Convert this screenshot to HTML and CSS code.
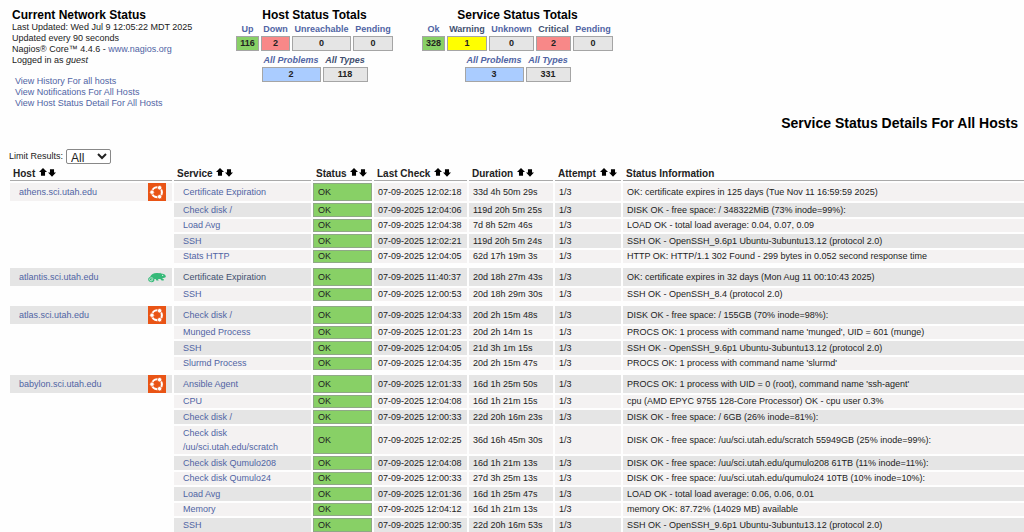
FILE: index.html
```html
<!DOCTYPE html>
<html lang="en">
<head>
<meta charset="utf-8">
<title>Current Network Status</title>
<link rel="stylesheet" href="styles.css">
</head>
<body>
<svg class="defs" aria-hidden="true">
  <symbol id="up" viewBox="0 0 9 9"><path d="M4.5 0 9 4.6H6.800V8.600H2.200V4.600H0z"/></symbol>
  <symbol id="down" viewBox="0 0 9 9"><path d="M2.200 .4H6.800V4H9L4.500 8.800 0 4H2.200z"/></symbol>
  <symbol id="ubuntu" viewBox="0 0 18 18">
    <rect width="18" height="18" fill="#e95415"/>
    <circle cx="9" cy="9.200" r="4.900" fill="none" stroke="#fff" stroke-width="2.100"/>
    <g fill="#fff" stroke="#e95415" stroke-width=".7"><circle cx="4" cy="9.200" r="2.200"/><circle cx="11.600" cy="4.700" r="2.200"/><circle cx="11.600" cy="13.700" r="2.200"/></g>
  </symbol>
  <symbol id="suse" viewBox="0 0 18 18">
    <path fill="#35b978" d="M2 9C3.500 5.500 7 4.300 11.300 5.300L12.300 4.700 12.800 5.600C15 5.500 17.500 6.600 17.800 8.200 18 9.400 16.500 10 14.800 9.900L14.200 10.500 16 11.500 15.600 12.500H13.600L12.300 10.900 10 11.100 10.700 12.600H8.400L7.600 11.100 6.300 11C7 13 5.600 14.200 3.500 14.200 1.300 14.200 0 12.800 .2 11.100.4 9.800 1.200 9.200 2 9z"/>
    <path fill="none" stroke="#d6efe2" stroke-width=".8" d="M5.300 10.500C3.500 9 1.400 10 1.500 11.500 1.700 13.200 4.300 13.400 4.700 12 4.800 11.200 3.600 10.900 3.200 11.600"/>
    <circle cx="14.700" cy="7.300" r=".6" fill="#fff"/>
  </symbol>
</svg>

<header class="top">
  <section class="info">
    <h1>Current Network Status</h1>
    <p>Last Updated: Wed Jul 9 12:05:22 MDT 2025<br>Updated every 90 seconds<br>Nagios® Core™ 4.4.6 - <a href="#">www.nagios.org</a><br>Logged in as <i>guest</i></p>
    <nav><a href="#">View History For all hosts</a><a href="#">View Notifications For All Hosts</a><a href="#">View Host Status Detail For All Hosts</a></nav>
  </section>
  <section class="totals">
    <h2>Host Status Totals</h2>
    <table>
      <colgroup><col class="w23"><col class="w29"><col class="w59"><col class="w40"></colgroup>
      <tr><th><a href="#">Up</a></th><th><a href="#">Down</a></th><th><a href="#">Unreachable</a></th><th><a href="#">Pending</a></th></tr>
      <tr><td class="ok">116</td><td class="bad">2</td><td>0</td><td>0</td></tr>
    </table>
    <table class="sum">
      <colgroup><col class="w59"><col class="w45"></colgroup>
      <tr><th><a href="#">All Problems</a></th><th><a class="seen" href="#">All Types</a></th></tr>
      <tr><td class="prob">2</td><td>118</td></tr>
    </table>
  </section>
  <section class="totals">
    <h2>Service Status Totals</h2>
    <table>
      <colgroup><col class="w23"><col class="w40"><col class="w45"><col class="w35"><col class="w40"></colgroup>
      <tr><th><a href="#">Ok</a></th><th><a class="seen" href="#">Warning</a></th><th><a href="#">Unknown</a></th><th><a class="seen" href="#">Critical</a></th><th><a href="#">Pending</a></th></tr>
      <tr><td class="ok">328</td><td class="warn">1</td><td>0</td><td class="bad">2</td><td>0</td></tr>
    </table>
    <table class="sum">
      <colgroup><col class="w59"><col class="w45"></colgroup>
      <tr><th><a href="#">All Problems</a></th><th><a href="#">All Types</a></th></tr>
      <tr><td class="prob">3</td><td>331</td></tr>
    </table>
  </section>
</header>

<h2 class="title">Service Status Details For All Hosts</h2>

<form class="limit">
  <label for="limit">Limit Results:</label>
  <select id="limit"><option>All</option><option>50</option><option>100</option></select>
</form>

<main class="results">
<table class="status">
  <colgroup><col class="c-host"><col class="c-service"><col class="c-status"><col class="c-check"><col class="c-duration"><col class="c-attempt"><col></colgroup>
  <thead>
  <tr>
    <th>Host <span class="sort"><svg><use href="#up"/></svg><svg><use href="#down"/></svg></span></th>
    <th>Service <span class="sort"><svg><use href="#up"/></svg><svg><use href="#down"/></svg></span></th>
    <th>Status <span class="sort"><svg><use href="#up"/></svg><svg><use href="#down"/></svg></span></th>
    <th>Last Check <span class="sort"><svg><use href="#up"/></svg><svg><use href="#down"/></svg></span></th>
    <th>Duration <span class="sort"><svg><use href="#up"/></svg><svg><use href="#down"/></svg></span></th>
    <th>Attempt <span class="sort"><svg><use href="#up"/></svg><svg><use href="#down"/></svg></span></th>
    <th>Status Information</th>
  </tr>
  </thead>
  <tbody>
  <tr class="odd first"><td class="host"><div><a href="#">athens.sci.utah.edu</a><svg><use href="#ubuntu"/></svg></div></td><td class="svc"><a href="#">Certificate Expiration</a></td><td class="st">OK</td><td>07-09-2025 12:02:18</td><td>33d 4h 50m 29s</td><td>1/3</td><td>OK: certificate expires in 125 days (Tue Nov 11 16:59:59 2025)</td></tr>
  <tr class="even"><td class="none"></td><td class="svc"><a href="#">Check disk /</a></td><td class="st">OK</td><td>07-09-2025 12:04:06</td><td>119d 20h 5m 25s</td><td>1/3</td><td>DISK OK - free space: / 348322MiB (73% inode=99%):</td></tr>
  <tr class="odd"><td class="none"></td><td class="svc"><a href="#">Load Avg</a></td><td class="st">OK</td><td>07-09-2025 12:04:38</td><td>7d 8h 52m 46s</td><td>1/3</td><td>LOAD OK - total load average: 0.04, 0.07, 0.09</td></tr>
  <tr class="even"><td class="none"></td><td class="svc"><a href="#">SSH</a></td><td class="st">OK</td><td>07-09-2025 12:02:21</td><td>119d 20h 5m 24s</td><td>1/3</td><td>SSH OK - OpenSSH_9.6p1 Ubuntu-3ubuntu13.12 (protocol 2.0)</td></tr>
  <tr class="odd"><td class="none"></td><td class="svc"><a href="#">Stats HTTP</a></td><td class="st">OK</td><td>07-09-2025 12:04:05</td><td>62d 17h 19m 3s</td><td>1/3</td><td>HTTP OK: HTTP/1.1 302 Found - 299 bytes in 0.052 second response time</td></tr>
  <tr class="gap"><td colspan="7"></td></tr>
  <tr class="even first"><td class="host"><div><a href="#">atlantis.sci.utah.edu</a><svg><use href="#suse"/></svg></div></td><td class="svc"><a class="seen" href="#">Certificate Expiration</a></td><td class="st">OK</td><td>07-09-2025 11:40:37</td><td>20d 18h 27m 43s</td><td>1/3</td><td>OK: certificate expires in 32 days (Mon Aug 11 00:10:43 2025)</td></tr>
  <tr class="odd"><td class="none"></td><td class="svc"><a href="#">SSH</a></td><td class="st">OK</td><td>07-09-2025 12:00:53</td><td>20d 18h 29m 30s</td><td>1/3</td><td>SSH OK - OpenSSH_8.4 (protocol 2.0)</td></tr>
  <tr class="gap"><td colspan="7"></td></tr>
  <tr class="even first"><td class="host"><div><a href="#">atlas.sci.utah.edu</a><svg><use href="#ubuntu"/></svg></div></td><td class="svc"><a href="#">Check disk /</a></td><td class="st">OK</td><td>07-09-2025 12:04:33</td><td>20d 2h 15m 48s</td><td>1/3</td><td>DISK OK - free space: / 155GB (70% inode=98%):</td></tr>
  <tr class="odd"><td class="none"></td><td class="svc"><a href="#">Munged Process</a></td><td class="st">OK</td><td>07-09-2025 12:01:23</td><td>20d 2h 14m 1s</td><td>1/3</td><td>PROCS OK: 1 process with command name 'munged', UID = 601 (munge)</td></tr>
  <tr class="even"><td class="none"></td><td class="svc"><a href="#">SSH</a></td><td class="st">OK</td><td>07-09-2025 12:04:05</td><td>21d 3h 1m 15s</td><td>1/3</td><td>SSH OK - OpenSSH_9.6p1 Ubuntu-3ubuntu13.12 (protocol 2.0)</td></tr>
  <tr class="odd"><td class="none"></td><td class="svc"><a href="#">Slurmd Process</a></td><td class="st">OK</td><td>07-09-2025 12:04:35</td><td>20d 2h 15m 47s</td><td>1/3</td><td>PROCS OK: 1 process with command name 'slurmd'</td></tr>
  <tr class="gap"><td colspan="7"></td></tr>
  <tr class="even first"><td class="host"><div><a href="#">babylon.sci.utah.edu</a><svg><use href="#ubuntu"/></svg></div></td><td class="svc"><a href="#">Ansible Agent</a></td><td class="st">OK</td><td>07-09-2025 12:01:33</td><td>16d 1h 25m 50s</td><td>1/3</td><td>PROCS OK: 1 process with UID = 0 (root), command name 'ssh-agent'</td></tr>
  <tr class="odd"><td class="none"></td><td class="svc"><a href="#">CPU</a></td><td class="st">OK</td><td>07-09-2025 12:04:08</td><td>16d 1h 21m 15s</td><td>1/3</td><td>cpu (AMD EPYC 9755 128-Core Processor) OK - cpu user 0.3%</td></tr>
  <tr class="even"><td class="none"></td><td class="svc"><a href="#">Check disk /</a></td><td class="st">OK</td><td>07-09-2025 12:00:33</td><td>22d 20h 16m 23s</td><td>1/3</td><td>DISK OK - free space: / 6GB (26% inode=81%):</td></tr>
  <tr class="odd multi"><td class="none"></td><td class="svc"><a href="#">Check disk<br>/uu/sci.utah.edu/scratch</a></td><td class="st">OK</td><td>07-09-2025 12:02:25</td><td>36d 16h 45m 30s</td><td>1/3</td><td>DISK OK - free space: /uu/sci.utah.edu/scratch 55949GB (25% inode=99%):</td></tr>
  <tr class="even"><td class="none"></td><td class="svc"><a href="#">Check disk Qumulo208</a></td><td class="st">OK</td><td>07-09-2025 12:04:08</td><td>16d 1h 21m 13s</td><td>1/3</td><td>DISK OK - free space: /uu/sci.utah.edu/qumulo208 61TB (11% inode=11%):</td></tr>
  <tr class="odd"><td class="none"></td><td class="svc"><a href="#">Check disk Qumulo24</a></td><td class="st">OK</td><td>07-09-2025 12:00:33</td><td>27d 3h 25m 13s</td><td>1/3</td><td>DISK OK - free space: /uu/sci.utah.edu/qumulo24 10TB (10% inode=10%):</td></tr>
  <tr class="even"><td class="none"></td><td class="svc"><a href="#">Load Avg</a></td><td class="st">OK</td><td>07-09-2025 12:01:36</td><td>16d 1h 25m 47s</td><td>1/3</td><td>LOAD OK - total load average: 0.06, 0.06, 0.01</td></tr>
  <tr class="odd"><td class="none"></td><td class="svc"><a href="#">Memory</a></td><td class="st">OK</td><td>07-09-2025 12:04:12</td><td>16d 1h 21m 13s</td><td>1/3</td><td>memory OK: 87.72% (14029 MB) available</td></tr>
  <tr class="even"><td class="none"></td><td class="svc"><a href="#">SSH</a></td><td class="st">OK</td><td>07-09-2025 12:00:35</td><td>22d 20h 16m 53s</td><td>1/3</td><td>SSH OK - OpenSSH_9.6p1 Ubuntu-3ubuntu13.12 (protocol 2.0)</td></tr>
  </tbody>
</table>
</main>
</body>
</html>
```
FILE: styles.css
```css
html { scrollbar-width: none; background: #fefefe; }
body { margin: 0; padding: 8px 0 0 8px; font: 9px/11px "Liberation Sans", Arial, sans-serif; color: #222; }
h1, h2, p { margin: 0; }
a { color: #5064a4; text-decoration: none; }
a.seen { color: #414f6f; }
table { table-layout: fixed; border-spacing: 2px; }
.defs { display: none; }

.top { display: flex; align-items: flex-start; gap: 25px; }
.info { width: 201px; padding-left: 4px; box-sizing: border-box; white-space: nowrap; }
.top h1, .top h2 { font-size: 12px; line-height: 14px; color: #000; }
.top h2 { text-align: center; }
.info nav { display: flex; flex-direction: column; margin-top: 10px; padding-left: 3px; }

.totals table { width: 0; margin: 0 auto; }
.totals th { padding: 0; height: 10px; line-height: 10px; white-space: nowrap; }
.totals td { box-sizing: border-box; height: 15px; padding: 0; border: 1px solid #a5a5a5; background: #e5e5e5; text-align: center; font-weight: bold; }
.totals .sum th { font-style: italic; }
.totals .ok { background: #88d066; }
.totals .bad { background: #f88888; }
.totals .warn { background: #ff0; }
.totals .prob { background: #aaccff; }
.w23 { width: 23px; }
.w29 { width: 29px; }
.w35 { width: 35px; }
.w40 { width: 40px; }
.w45 { width: 45px; }
.w59 { width: 59px; }

.title { margin-top: 6px; padding-right: 6px; font-size: 14px; line-height: 16px; text-align: right; color: #000; }
.limit { display: flex; align-items: center; gap: 3px; margin-top: 18px; padding-left: 1px; }
.limit select { width: 45px; height: 15px; padding: 0; border: 1px solid #888; border-radius: 2px; background: #fff; color: #222; font: 12px/11px "Liberation Sans", Arial, sans-serif; }

.results { overflow: hidden; }
.status { width: calc(100% + 2px); }
.c-host { width: 162px; }
.c-service { width: 137px; }
.c-status { width: 59px; }
.c-check { width: 93px; }
.c-duration { width: 84px; }
.c-attempt { width: 66px; }
.status th { box-sizing: border-box; height: 15px; padding: 1px 0 0 3px; border-bottom: 1px solid #aaa; font-size: 10px; line-height: 13px; text-align: left; white-space: nowrap; }
.sort { display: inline-flex; gap: 1px; margin-left: 1px; vertical-align: 1px; }
.sort svg { width: 8px; height: 8px; fill: #000; }
.sort svg + svg { margin-top: 1px; }
.status td { box-sizing: border-box; height: 13px; padding: 0 0 0 4px; line-height: 13px; vertical-align: middle; }
.odd td { background: #f4f2f2; }
.even td { height: 14px; background: #e5e5e5; }
.status .first td { height: 18px; }
.status .multi td { height: 28px; line-height: 14px; }
.status .gap td { height: 1px; padding: 0; }
.status .none { background: none; }
.status .svc { padding-left: 9px; }
.status .host { padding: 0 6px 0 9px; }
.host div { display: flex; align-items: center; justify-content: space-between; }
.host svg { width: 18px; height: 18px; }
.status .st { padding-left: 4px; border: 1px solid #8fa886; background: #88d066; line-height: 11px; }
```
